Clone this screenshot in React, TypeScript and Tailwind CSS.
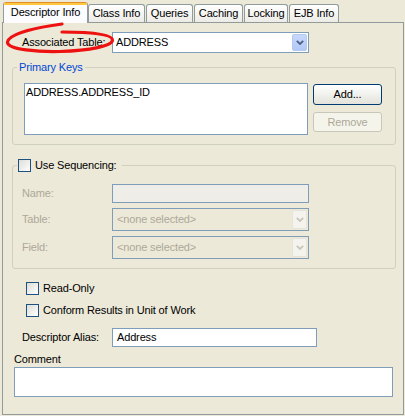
import { ReactNode } from 'react'

const tabs = [
  { label: 'Class Info', w: 'w-[57px]', ml: 'ml-0' },
  { label: 'Queries', w: 'w-[47px]', ml: 'ml-[1px]' },
  { label: 'Caching', w: 'w-[49px]', ml: 'ml-[1px]' },
  { label: 'Locking', w: 'w-[44px]', ml: 'ml-[1px]' },
  { label: 'EJB Info', w: 'w-[50px]', ml: 'ml-[1px]' },
]

function Chevron({ color }: { color: string }) {
  return (
    <svg width="8" height="5" viewBox="0 0 8 5">
      <path d="M0.8 0.8 L4 4 L7.2 0.8" fill="none" stroke={color} strokeWidth="1.8" />
    </svg>
  )
}

function CheckBox() {
  return (
    <div className="w-[13px] h-[13px] shrink-0 border border-[#1C5180] bg-linear-to-br from-[#DCDCD7] to-white" />
  )
}

function DisabledCombo({ text }: { text: string }) {
  return (
    <div className="w-[197px] h-[23px] border border-[#7F9DB9] bg-[#ECE9D8] flex items-center">
      <span className="flex-1 pl-[4px] text-[#ACA899]">{text}</span>
      <div className="w-[15px] h-[19px] mr-[1px] rounded-[2px] bg-[#F4F3EE] border border-[#E6E4DA] flex items-center justify-center">
        <Chevron color="#C9C7BA" />
      </div>
    </div>
  )
}

function Row({ label, children, disabled }: { label: string; children: ReactNode; disabled?: boolean }) {
  return (
    <div className="flex items-center">
      <span className={'w-[90px] ' + (disabled ? 'text-[#ACA899]' : 'text-black')}>{label}</span>
      {children}
    </div>
  )
}

export default function App() {
  return (
    <div className="relative w-[405px] h-[416px] bg-[#ECE9D8] pt-[2px] pl-[2px] font-['Liberation_Sans',Arial,sans-serif] text-[11px] leading-[13px] tracking-[-0.15px] text-black">
      {/* Tabs */}
      <div className="relative z-10 flex items-end h-[20px] pl-[1px]">
        <div className="self-start w-[85px] h-[21px] border-x border-[#919B9C] rounded-t-[3px] overflow-hidden bg-[#FCFCFE] flex flex-col">
          <div className="h-[1px] bg-[#E68B2C]" />
          <div className="h-[2px] bg-[#FFC73C]" />
          <div className="pt-[1px] text-center">Descriptor Info</div>
        </div>
        {tabs.map((t) => (
          <div
            key={t.label}
            className={
              t.w +
              ' ' +
              t.ml +
              ' h-[18px] border border-b-0 border-[#919B9C] rounded-t-[3px] bg-linear-to-b from-white to-[#ECEBE6] pt-[2px] text-center'
            }
          >
            {t.label}
          </div>
        ))}
      </div>

      {/* Panel */}
      <div className="w-[402px] h-[393px] border border-[#919B9C] flex flex-col">
        <div className="mt-[9px] flex items-center h-[21px]">
          <span className="pl-[19px] w-[109px]">Associated Table:</span>
          <div className="w-[197px] h-[21px] border border-[#7F9DB9] bg-white flex items-center">
            <span className="flex-1 pl-[3px]">ADDRESS</span>
            <div className="w-[15px] h-[17px] mr-[1px] rounded-[2px] bg-linear-to-b from-[#C8D8FC] to-[#B1C8F6] border border-[#B4C8F0] flex items-center justify-center">
              <Chevron color="#4D6185" />
            </div>
          </div>
        </div>

        {/* Primary Keys */}
        <div className="relative mt-[14px] ml-[9px] w-[384px] h-[78px] border border-[#D0D0BF] rounded-[3px] flex pt-[15px] pl-[11px]">
          <span className="absolute left-[4px] top-[-7px] px-[2px] bg-[#ECE9D8] text-[#0046D5]">Primary Keys</span>
          <div className="w-[284px] h-[52px] border border-[#7F9DB9] bg-white pl-[1px] pt-[2px]">ADDRESS.ADDRESS_ID</div>
          <div className="ml-[5px] mt-[1px] flex flex-col">
            <button className="w-[69px] h-[21px] border border-[#003C74] rounded-[3px] bg-linear-to-b from-white to-[#E3E3DB] text-black">
              Add...
            </button>
            <button className="mt-[7px] w-[69px] h-[20px] border border-[#C9C7BA] rounded-[3px] bg-[#F5F4EA] text-[#ACA899]">
              Remove
            </button>
          </div>
        </div>

        {/* Use Sequencing */}
        <div className="relative mt-[20px] ml-[9px] w-[384px] h-[104px] border border-[#D0D0BF] rounded-[3px] flex flex-col gap-[5px] pt-[18px] pl-[9px]">
          <div className="absolute left-[4px] top-[-7px] h-[13px] pl-[1px] pr-[5px] bg-[#ECE9D8] flex items-center gap-[4px]">
            <CheckBox />
            <span>Use Sequencing:</span>
          </div>
          <Row label="Name:" disabled>
            <div className="w-[197px] h-[19px] border border-[#7F9DB9] bg-[#EEEDE7]" />
          </Row>
          <Row label="Table:" disabled>
            <DisabledCombo text="<none selected>" />
          </Row>
          <Row label="Field:" disabled>
            <DisabledCombo text="<none selected>" />
          </Row>
        </div>

        <div className="mt-[13px] ml-[23px] h-[13px] flex items-center gap-[4px]">
          <CheckBox />
          <span>Read-Only</span>
        </div>
        <div className="mt-[9px] ml-[23px] h-[13px] flex items-center gap-[4px]">
          <CheckBox />
          <span>Conform Results in Unit of Work</span>
        </div>

        <div className="mt-[11px] flex items-center h-[19px]">
          <span className="pl-[19px] w-[109px]">Descriptor Alias:</span>
          <div className="w-[205px] h-[19px] border border-[#7F9DB9] bg-white flex items-center pl-[4px]">Address</div>
        </div>

        <span className="mt-[6px] ml-[11px]">Comment</span>
        <div className="mt-[1px] ml-[11px] w-[379px] h-[30px] border border-[#7F9DB9] bg-white" />
      </div>

      {/* red annotation */}
      <svg className="absolute left-0 top-0 z-20 pointer-events-none" width="405" height="60" viewBox="0 0 405 60">
        <path
          d="M62 24 C 40 27, 9 33, 7.5 42 C 7 50, 40 52, 60 51.5 C 90 50.5, 112.5 46, 112.5 40 C 112.5 34, 90 32, 62 32"
          fill="none"
          stroke="#EE1111"
          strokeWidth="3.2"
          strokeLinecap="round"
        />
      </svg>
    </div>
  )
}
